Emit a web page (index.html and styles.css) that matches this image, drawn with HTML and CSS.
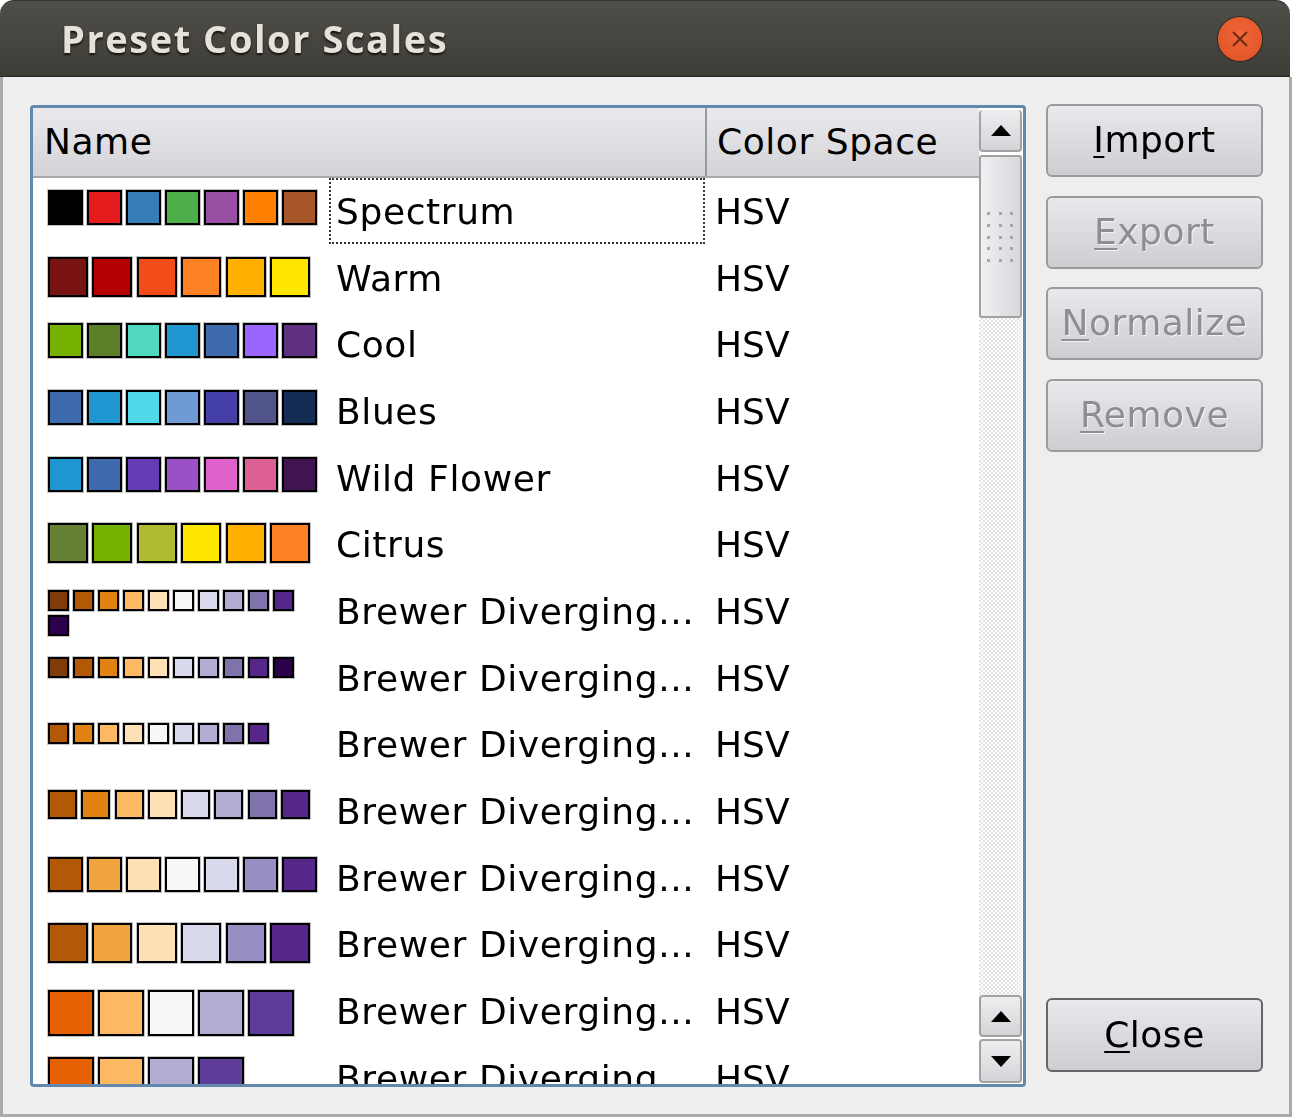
FILE: index.html
```html
<!DOCTYPE html>
<html lang="en">
  <head>
    <meta charset="UTF-8" />
    <title>Preset Color Scales</title>
    <link rel="stylesheet" href="styles.css">
  </head>
  <body>
    <div class="window">
      <div class="titlebar">
        <span class="title">Preset Color Scales</span>
        <span class="close-btn">
          <svg width="18" height="18" viewBox="0 0 18 18"><path d="M2 2L16 16M16 2L2 16" stroke="#6a2a14" stroke-width="2" fill="none"/></svg>
        </span>
      </div>
      <div class="main">
        <div class="table-box">
          <div class="table">
            <div class="table-head">
              <div class="head-name">Name</div>
              <div class="head-space">Color Space</div>
            </div>
            <div class="rows">
              <div class="row">
                <div class="swatches s7"><i class="c-000000"></i><i class="c-e41a1c"></i><i class="c-377eb8"></i><i class="c-4daf4a"></i><i class="c-984ea3"></i><i class="c-ff7f00"></i><i class="c-a65628"></i></div>
                <div class="name focused">Spectrum</div>
                <div class="space">HSV</div>
              </div>
              <div class="row">
                <div class="swatches s6"><i class="c-7a1414"></i><i class="c-b30000"></i><i class="c-f24c1a"></i><i class="c-fd8023"></i><i class="c-ffb000"></i><i class="c-ffe600"></i></div>
                <div class="name">Warm</div>
                <div class="space">HSV</div>
              </div>
              <div class="row">
                <div class="swatches s7"><i class="c-76b000"></i><i class="c-5b8028"></i><i class="c-50d8c0"></i><i class="c-1e96d0"></i><i class="c-3c6aac"></i><i class="c-9b66ff"></i><i class="c-5f3080"></i></div>
                <div class="name">Cool</div>
                <div class="space">HSV</div>
              </div>
              <div class="row">
                <div class="swatches s7"><i class="c-3c6aac"></i><i class="c-1e96d0"></i><i class="c-50d8e8"></i><i class="c-709ad4"></i><i class="c-4440a8"></i><i class="c-505488"></i><i class="c-122c54"></i></div>
                <div class="name">Blues</div>
                <div class="space">HSV</div>
              </div>
              <div class="row">
                <div class="swatches s7"><i class="c-1e96d0"></i><i class="c-3c6aac"></i><i class="c-663cb4"></i><i class="c-9c50c8"></i><i class="c-e060cc"></i><i class="c-dc6094"></i><i class="c-401450"></i></div>
                <div class="name">Wild Flower</div>
                <div class="space">HSV</div>
              </div>
              <div class="row">
                <div class="swatches s6"><i class="c-668034"></i><i class="c-76b000"></i><i class="c-b0bc30"></i><i class="c-ffe600"></i><i class="c-ffb000"></i><i class="c-fd8023"></i></div>
                <div class="name">Citrus</div>
                <div class="space">HSV</div>
              </div>
              <div class="row">
                <div class="swatches s11"><i class="c-7f3b08"></i><i class="c-b35806"></i><i class="c-e08214"></i><i class="c-fdb863"></i><i class="c-fee0b6"></i><i class="c-f7f7f7"></i><i class="c-d8daeb"></i><i class="c-b2abd2"></i><i class="c-8073ac"></i><i class="c-542788"></i><i class="c-2d004b"></i></div>
                <div class="name">Brewer Diverging...</div>
                <div class="space">HSV</div>
              </div>
              <div class="row">
                <div class="swatches s11"><i class="c-7f3b08"></i><i class="c-b35806"></i><i class="c-e08214"></i><i class="c-fdb863"></i><i class="c-fee0b6"></i><i class="c-d8daeb"></i><i class="c-b2abd2"></i><i class="c-8073ac"></i><i class="c-542788"></i><i class="c-2d004b"></i></div>
                <div class="name">Brewer Diverging...</div>
                <div class="space">HSV</div>
              </div>
              <div class="row">
                <div class="swatches s11"><i class="c-b35806"></i><i class="c-e08214"></i><i class="c-fdb863"></i><i class="c-fee0b6"></i><i class="c-f7f7f7"></i><i class="c-d8daeb"></i><i class="c-b2abd2"></i><i class="c-8073ac"></i><i class="c-542788"></i></div>
                <div class="name">Brewer Diverging...</div>
                <div class="space">HSV</div>
              </div>
              <div class="row">
                <div class="swatches s8"><i class="c-b35806"></i><i class="c-e08214"></i><i class="c-fdb863"></i><i class="c-fee0b6"></i><i class="c-d8daeb"></i><i class="c-b2abd2"></i><i class="c-8073ac"></i><i class="c-542788"></i></div>
                <div class="name">Brewer Diverging...</div>
                <div class="space">HSV</div>
              </div>
              <div class="row">
                <div class="swatches s7"><i class="c-b35806"></i><i class="c-f1a340"></i><i class="c-fee0b6"></i><i class="c-f7f7f7"></i><i class="c-d8daeb"></i><i class="c-998ec3"></i><i class="c-542788"></i></div>
                <div class="name">Brewer Diverging...</div>
                <div class="space">HSV</div>
              </div>
              <div class="row">
                <div class="swatches s6"><i class="c-b35806"></i><i class="c-f1a340"></i><i class="c-fee0b6"></i><i class="c-d8daeb"></i><i class="c-998ec3"></i><i class="c-542788"></i></div>
                <div class="name">Brewer Diverging...</div>
                <div class="space">HSV</div>
              </div>
              <div class="row">
                <div class="swatches s5"><i class="c-e66101"></i><i class="c-fdb863"></i><i class="c-f7f7f7"></i><i class="c-b2abd2"></i><i class="c-5e3c99"></i></div>
                <div class="name">Brewer Diverging...</div>
                <div class="space">HSV</div>
              </div>
              <div class="row">
                <div class="swatches s5"><i class="c-e66101"></i><i class="c-fdb863"></i><i class="c-b2abd2"></i><i class="c-5e3c99"></i></div>
                <div class="name">Brewer Diverging...</div>
                <div class="space">HSV</div>
              </div>
            </div>
          </div>
          <div class="scrollbar">
            <div class="sb-btn sb-top"><span class="arrow-up"></span></div>
            <div class="sb-thumb">
              <svg width="30" height="52" viewBox="0 0 30 52" fill="#a6a6aa">
                <rect x="1" y="1" width="3" height="3"/><rect x="13" y="1" width="3" height="3"/><rect x="24" y="1" width="3" height="3"/>
                <rect x="1" y="13" width="3" height="3"/><rect x="13" y="13" width="3" height="3"/><rect x="24" y="13" width="3" height="3"/>
                <rect x="1" y="25" width="3" height="3"/><rect x="13" y="25" width="3" height="3"/><rect x="24" y="25" width="3" height="3"/>
                <rect x="1" y="36" width="3" height="3"/><rect x="13" y="36" width="3" height="3"/><rect x="24" y="36" width="3" height="3"/>
                <rect x="1" y="48" width="3" height="3"/><rect x="13" y="48" width="3" height="3"/><rect x="24" y="48" width="3" height="3"/>
              </svg>
            </div>
            <div class="sb-track"></div>
            <div class="sb-btn"><span class="arrow-up"></span></div>
            <div class="sb-btn sb-bottom"><span class="arrow-down"></span></div>
          </div>
        </div>
        <div class="side">
          <div class="btn"><span><u>I</u>mport</span></div>
          <div class="btn disabled"><span><u>E</u>xport</span></div>
          <div class="btn disabled"><span><u>N</u>ormalize</span></div>
          <div class="btn disabled"><span><u>R</u>emove</span></div>
          <div class="btn close"><span><u>C</u>lose</span></div>
        </div>
      </div>
    </div>
  </body>
</html>
```

FILE: styles.css
```css
html, body {
  margin: 0;
  height: 100%;
  background: #fff;
}
.window {
  height: 1117px;
  display: flex;
  flex-direction: column;
  font-family: "DejaVu Sans", sans-serif;
  font-size: 36px;
  color: #000;
  filter: blur(0.5px);
}
.titlebar {
  height: 75px;
  flex: none;
  display: flex;
  align-items: center;
  justify-content: space-between;
  padding: 0 28px 0 61px;
  background: linear-gradient(#504e48, #3e3c37);
  border-top: 1px solid #35332f;
  border-bottom: 1px solid #25241f;
  border-radius: 14px 14px 0 0;
  margin-right: 2px;
}
.title {
  padding-bottom: 2px;
  font-family: "Open Sans", sans-serif;
  font-weight: 700;
  font-size: 38px;
  letter-spacing: 1.55px;
  color: #e6e2d9;
  text-shadow: 0 2px 2px #14130f;
}
.close-btn {
  width: 44px;
  height: 44px;
  border-radius: 50%;
  display: flex;
  align-items: center;
  justify-content: center;
  background: radial-gradient(circle at 50% 40%, #f0663a, #df5020);
  box-shadow: 0 0 0 1px #2e2a26;
}
.main {
  flex: 1;
  min-height: 0;
  display: flex;
  gap: 20px;
  padding: 27px 26px 27px 27px;
  background: #eeeeee;
  border: solid #ababab;
  border-width: 0 3px 3px 3px;
}
.table-box {
  flex: 1;
  margin-top: 1px;
  display: flex;
  min-width: 0;
  border: 3px solid #6289ad;
  border-radius: 4px;
  background: #fff;
  overflow: hidden;
}
.table {
  flex: 1;
  min-width: 0;
  overflow: hidden;
  display: flex;
  flex-direction: column;
}
.table-head {
  height: 70px;
  flex: none;
  display: flex;
  background: linear-gradient(#e9e9ee, #d3d3d8);
  border-bottom: 2px solid #a8a8ac;
  box-sizing: border-box;
  letter-spacing: 0.55px;
}
.head-name {
  width: 674px;
  box-sizing: border-box;
  padding: 13px 0 0 11px;
  border-right: 2px solid #9a9a9e;
}
.head-space {
  flex: 1;
  padding: 13px 0 0 10px;
}
.rows {
  flex: none;
}
.row {
  height: 66.67px;
  display: flex;
}
.swatches {
  width: 270px;
  margin: 0 11px 0 15px;
  padding-top: 12px;
  box-sizing: border-box;
  display: flex;
  flex-wrap: wrap;
  align-content: flex-start;
}
.swatches i {
  display: block;
  box-sizing: border-box;
  border: 2px solid #000;
  outline: 1px solid #c4c4c4;
}
.s5 { gap: 4px; }
.s5 i { width: 46px; height: 46px; }
.s6 { gap: 4.4px; }
.s6 i { width: 40px; height: 40px; }
.s7 { gap: 4.5px; }
.s7 i { width: 34.5px; height: 35px; }
.s8 { gap: 4.3px; }
.s8 i { width: 29px; height: 29px; }
.s11 { gap: 4px; }
.s11 i { width: 21px; height: 21px; }
.name {
  width: 376px;
  box-sizing: border-box;
  padding: 13px 0 0 7px;
  white-space: nowrap;
  overflow: hidden;
  letter-spacing: 0.6px;
}
.name.focused {
  height: 66px;
  padding: 11px 0 0 5px;
  border: 2px dotted #333;
}
.space {
  padding: 13px 0 0 10px;
}
.scrollbar {
  width: 44px;
  flex: none;
  display: flex;
  flex-direction: column;
  padding: 2px 1px 1px 0;
  box-sizing: border-box;
  background: #fff;
}
.sb-btn {
  height: 42px;
  flex: none;
  display: flex;
  align-items: center;
  justify-content: center;
  box-sizing: border-box;
  background: linear-gradient(#eeeef1, #d4d4d8);
  border: 2px solid #a2a2a2;
  border-radius: 4px;
}
.sb-top {
  border-top-width: 0;
}
.sb-bottom {
  height: 44px;
  margin-top: 2px;
}
.arrow-up, .arrow-down {
  width: 0;
  height: 0;
  border-left: 10px solid transparent;
  border-right: 10px solid transparent;
}
.arrow-up {
  border-bottom: 11px solid #000;
}
.arrow-down {
  border-top: 11px solid #000;
}
.sb-thumb {
  height: 163px;
  flex: none;
  margin-top: 3px;
  box-sizing: border-box;
  display: flex;
  align-items: center;
  justify-content: center;
  background: linear-gradient(90deg, #f0f0f3, #d8d8dc);
  border: 2px solid #a2a2a2;
  border-radius: 3px;
}
.sb-track {
  flex: 1;
  background: repeating-conic-gradient(#e4e4e4 0 25%, #fff 0 50%) 0 0 / 4px 4px;
}
.side {
  width: 217px;
  flex: none;
  display: flex;
  flex-direction: column;
  gap: 18.6px;
  margin-bottom: 15px;
}
.btn {
  height: 73px;
  flex: none;
  box-sizing: border-box;
  display: flex;
  align-items: center;
  justify-content: center;
  background: linear-gradient(#e9e9ed, #cdcdd2);
  border: 2px solid #9b9b9b;
  border-radius: 6px;
  letter-spacing: 0.5px;
}
.btn span {
  position: relative;
  top: -1px;
}
.btn u {
  text-underline-offset: 4px;
  text-decoration-thickness: 2px;
}
.btn.disabled {
  color: #8e8e92;
  text-shadow: 1px 1px 0 #f4f4f4;
}
.btn.close {
  height: 74px;
  margin-top: auto;
  border-color: #666;
}
.c-000000 { background: #000000; }
.c-e41a1c { background: #e41a1c; }
.c-377eb8 { background: #377eb8; }
.c-4daf4a { background: #4daf4a; }
.c-984ea3 { background: #984ea3; }
.c-ff7f00 { background: #ff7f00; }
.c-a65628 { background: #a65628; }
.c-7a1414 { background: #7a1414; }
.c-b30000 { background: #b30000; }
.c-f24c1a { background: #f24c1a; }
.c-fd8023 { background: #fd8023; }
.c-ffb000 { background: #ffb000; }
.c-ffe600 { background: #ffe600; }
.c-76b000 { background: #76b000; }
.c-5b8028 { background: #5b8028; }
.c-50d8c0 { background: #50d8c0; }
.c-1e96d0 { background: #1e96d0; }
.c-3c6aac { background: #3c6aac; }
.c-9b66ff { background: #9b66ff; }
.c-5f3080 { background: #5f3080; }
.c-50d8e8 { background: #50d8e8; }
.c-709ad4 { background: #709ad4; }
.c-4440a8 { background: #4440a8; }
.c-505488 { background: #505488; }
.c-122c54 { background: #122c54; }
.c-663cb4 { background: #663cb4; }
.c-9c50c8 { background: #9c50c8; }
.c-e060cc { background: #e060cc; }
.c-dc6094 { background: #dc6094; }
.c-401450 { background: #401450; }
.c-668034 { background: #668034; }
.c-b0bc30 { background: #b0bc30; }
.c-7f3b08 { background: #7f3b08; }
.c-b35806 { background: #b35806; }
.c-e08214 { background: #e08214; }
.c-fdb863 { background: #fdb863; }
.c-fee0b6 { background: #fee0b6; }
.c-f7f7f7 { background: #f7f7f7; }
.c-d8daeb { background: #d8daeb; }
.c-b2abd2 { background: #b2abd2; }
.c-8073ac { background: #8073ac; }
.c-542788 { background: #542788; }
.c-2d004b { background: #2d004b; }
.c-f1a340 { background: #f1a340; }
.c-998ec3 { background: #998ec3; }
.c-e66101 { background: #e66101; }
.c-5e3c99 { background: #5e3c99; }
```
